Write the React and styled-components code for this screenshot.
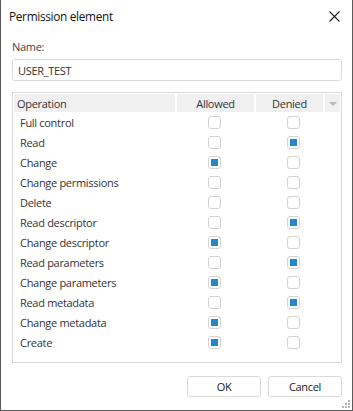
import React from "react";
import styled, { createGlobalStyle } from "styled-components";

const Global = createGlobalStyle`
  html, body { margin: 0; padding: 0; background: #fff; }
  body { font-family: "Open Sans", "Noto Sans", sans-serif; letter-spacing: -0.3px; }
`;

const Window = styled.div`
  box-sizing: border-box;
  width: 353px;
  height: 411px;
  border: 1px solid #5a5a5a;
  border-top: none;
  background: #fff;
  display: flex;
  flex-direction: column;
  position: relative;
  color: #333;
`;

const TitleBar = styled.div`
  height: 32px;
  display: flex;
  align-items: center;
  justify-content: space-between;
  padding: 0 12px 0 8px;
`;

const Title = styled.div`
  font-size: 11.8px;
  color: #111;
`;

const Body = styled.div`
  display: flex;
  flex-direction: column;
  padding: 7px 10px 0 11px;
`;

const Label = styled.div`
  font-size: 11px;
  line-height: 16px;
  color: #444;
`;

const Input = styled.div`
  margin-top: 4px;
  height: 22px;
  box-sizing: border-box;
  border: 1px solid #dadada;
  border-radius: 3px;
  padding: 0 5px;
  display: flex;
  align-items: center;
  font-size: 11px;
  color: #333;
`;

const Grid = styled.div`
  margin-top: 11px;
  height: 271px;
  box-sizing: border-box;
  border: 1px solid #d9d9d9;
  padding: 1px;
`;

const Cols = "161px 79px 69px 1fr";

const Header = styled.div`
  display: grid;
  grid-template-columns: ${Cols};
  height: 18px;
  font-size: 11px;
`;

const HeadCell = styled.div`
  background: #f0f0f0;
  display: flex;
  align-items: center;
  justify-content: ${(p) => (p.$left ? "flex-start" : "center")};
  padding-left: ${(p) => (p.$left ? "3px" : "0")};
  border-left: ${(p) => (p.$first ? "none" : "2px solid #fff")};
  color: #333;
`;

const Arrow = styled.div`
  width: 0;
  height: 0;
  border-left: 4px solid transparent;
  border-right: 4px solid transparent;
  border-top: 4px solid #b8b8b8;
  margin-top: 1px;
`;

const Row = styled.div`
  display: grid;
  grid-template-columns: ${Cols};
  height: 20px;
  align-items: center;
  font-size: 11px;
`;

const OpName = styled.div`
  padding-left: 6px;
  color: #333;
`;

const Cell = styled.div`
  display: flex;
  justify-content: center;
  padding-left: ${(p) => p.$shift || "0"};
`;

const Box = styled.div`
  box-sizing: border-box;
  width: 13px;
  height: 13px;
  border: 1px solid #d3d3d3;
  border-radius: 3px;
  display: flex;
  align-items: center;
  justify-content: center;
  &::after {
    content: "";
    display: ${(p) => (p.$checked ? "block" : "none")};
    width: 7px;
    height: 7px;
    background: #2288cc;
  }
`;

const Footer = styled.div`
  display: flex;
  justify-content: flex-end;
  gap: 7px;
  margin-top: 13px;
`;

const Button = styled.div`
  box-sizing: border-box;
  width: 74px;
  height: 21px;
  border: 1px solid #dadada;
  border-radius: 3px;
  display: flex;
  align-items: center;
  justify-content: center;
  font-size: 11px;
  color: #222;
`;

const Grip = styled.svg`
  position: absolute;
  right: 1px;
  bottom: 1px;
`;

const ops = [
  ["Full control", false, false],
  ["Read", false, true],
  ["Change", true, false],
  ["Change permissions", false, false],
  ["Delete", false, false],
  ["Read descriptor", false, true],
  ["Change descriptor", true, false],
  ["Read parameters", false, true],
  ["Change parameters", true, false],
  ["Read metadata", false, true],
  ["Change metadata", true, false],
  ["Create", true, false],
];

export default function App() {
  return (
    <>
      <Global />
      <Window>
        <TitleBar>
          <Title>Permission element</Title>
          <svg width="11" height="11" viewBox="0 0 11 11">
            <path d="M0.5 0.5L10.5 10.5M10.5 0.5L0.5 10.5" stroke="#222" strokeWidth="1.1" />
          </svg>
        </TitleBar>
        <Body>
          <Label>Name:</Label>
          <Input>USER_TEST</Input>
          <Grid>
            <Header>
              <HeadCell $left $first>Operation</HeadCell>
              <HeadCell>Allowed</HeadCell>
              <HeadCell>Denied</HeadCell>
              <HeadCell>
                <Arrow />
              </HeadCell>
            </Header>
            {ops.map(([name, a, d]) => (
              <Row key={name}>
                <OpName>{name}</OpName>
                <Cell $shift="0px">
                  <Box $checked={a} />
                </Cell>
                <Cell $shift="10px">
                  <Box $checked={d} />
                </Cell>
                <div />
              </Row>
            ))}
          </Grid>
          <Footer>
            <Button>OK</Button>
            <Button>Cancel</Button>
          </Footer>
        </Body>
        <Grip width="10" height="10" viewBox="0 0 10 10">
          {[
            [7, 1],
            [4, 4],
            [7, 4],
            [1, 7],
            [4, 7],
            [7, 7],
          ].map(([x, y]) => (
            <rect key={`${x}-${y}`} x={x} y={y} width="2" height="2" fill="#b5b5b5" />
          ))}
        </Grip>
      </Window>
    </>
  );
}
